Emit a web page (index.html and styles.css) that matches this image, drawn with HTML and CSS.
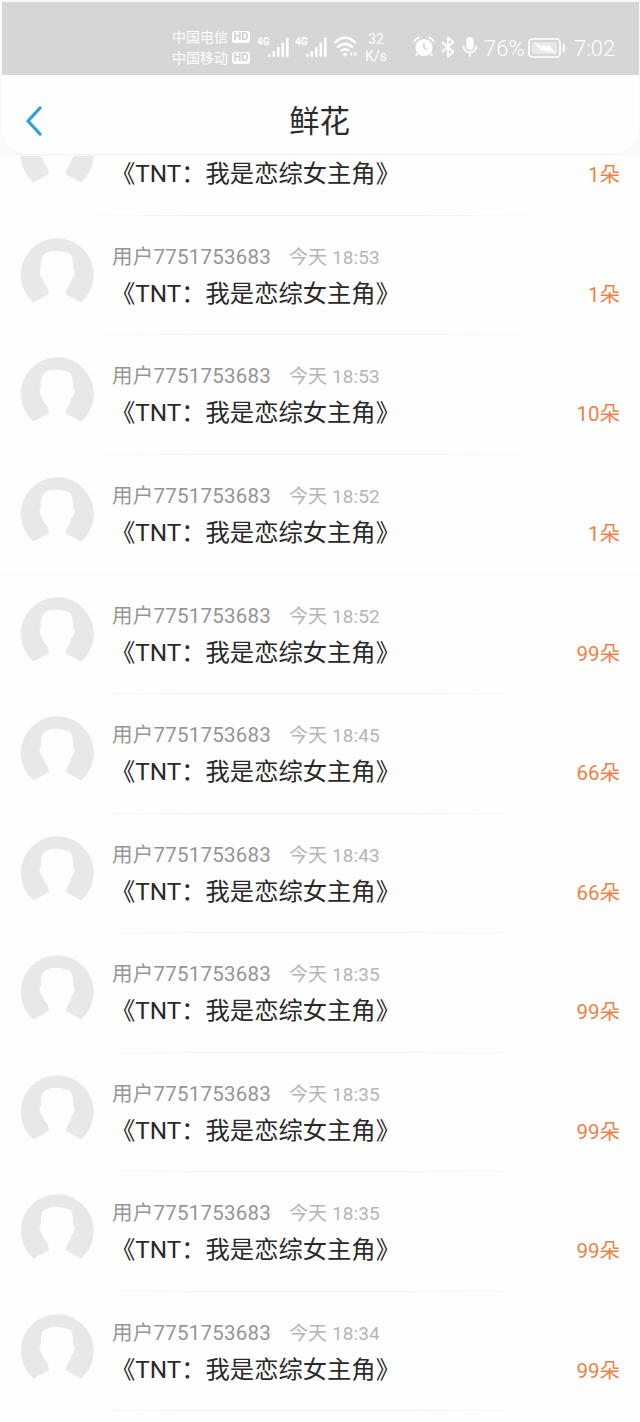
FILE: index.html
```html
<!DOCTYPE html>
<html lang="zh-CN">
<head>
<meta charset="utf-8">
<title>鲜花</title>
<link rel="stylesheet" href="styles.css">
</head>
<body>
<div class="screen">
  <div class="top">
    <div class="status">
      <div class="carriers">
        <div class="carrier">中国电信<span class="hd">HD</span></div>
        <div class="carrier">中国移动<span class="hd">HD</span></div>
      </div>
      <svg class="signal" viewBox="0 0 32 22" width="32" height="22"><text x="0" y="9" class="net">4G</text><g fill="#fff"><rect x="11" y="18" width="2.6" height="3" rx="1"/><rect x="15.5" y="15" width="2.6" height="6" rx="1"/><rect x="20" y="11" width="2.6" height="10" rx="1"/><rect x="24.5" y="6.500" width="2.6" height="14.500" rx="1"/><rect x="29" y="1.500" width="2.6" height="19.500" rx="1"/></g></svg>
      <svg class="signal second" viewBox="0 0 32 22" width="32" height="22"><text x="0" y="9" class="net">4G</text><g fill="#fff"><rect x="11" y="18" width="2.6" height="3" rx="1"/><rect x="15.5" y="15" width="2.6" height="6" rx="1"/><rect x="20" y="11" width="2.6" height="10" rx="1"/><rect x="24.5" y="6.500" width="2.6" height="14.500" rx="1"/><rect x="29" y="1.500" width="2.6" height="19.500" rx="1"/></g></svg>
      <svg class="wifi" viewBox="0 0 26 22" width="26" height="22" fill="none" stroke="#fff" stroke-width="2.500" stroke-linecap="round"><path d="M2 6.500C8 .2 16 .2 22 6.500M5 11C9 7 15 7 19 11M8.500 14.500C10.500 13 13.500 13 15.500 14.500"/><circle cx="12" cy="18.500" r="2" fill="#fff" stroke="none"/><path d="M19.300 15.500v5L16.800 18zM21.300 15.500v5L24.300 18z" fill="#fff" stroke="none"/></svg>
      <div class="speed"><span>32</span><span>K/s</span></div>
      <svg class="alarm" viewBox="0 0 22 22" width="22" height="22"><circle cx="11" cy="11.500" r="8.600" fill="#fff"/><path d="M1.500 5Q3 2.500 5.500 1.700M16.500 1.700Q19 2.500 20.500 5M4.500 17.500l-1.500 2M17.500 17.500l1.500 2" stroke="#fff" stroke-width="1.800" fill="none" stroke-linecap="round"/><path d="M11 6.500v5.200l3.500 2.500" stroke="#d6d6d6" stroke-width="1.500" fill="none"/></svg>
      <svg class="bt" viewBox="0 0 14 22" width="14" height="22" fill="none" stroke="#fff" stroke-width="1.900" stroke-linejoin="round" stroke-linecap="round"><path d="M1.500 6.500L12.300 15.800 7 20.500V1.500L12.300 6.200 1.500 15.500"/></svg>
      <svg class="mic" viewBox="0 0 16 22" width="16" height="22" fill="none" stroke="#fff" stroke-width="2" stroke-linecap="round"><rect x="4.300" y="1" width="7.400" height="13" rx="3.700" fill="#fff" stroke="none"/><path d="M1.500 10.500C2 18.200 14 18.200 14.500 10.500M8 16.500V20"/></svg>
      <span class="num pct">76%</span>
      <svg class="battery" viewBox="0 0 38 20" width="38" height="20"><rect x="1" y="1" width="31" height="18" rx="3.500" fill="none" stroke="#fff" stroke-width="1.700"/><rect x="4" y="4" width="25" height="12" rx="1" fill="#e8e8e8"/><path d="M6 4.500L15 9 14 5.500 20 9.500 20 6 28 16 21 13 21 15 15 11.500 15 14z" fill="#fff"/><path d="M35.700 6.500v7" stroke="#fff" stroke-width="2" stroke-linecap="round"/></svg>
      <span class="num clock">7:02</span>
    </div>
    <header class="header">
      <svg class="back" viewBox="0 0 20 32" width="20" height="32"><path d="M18 3L6 16 18 29" fill="none" stroke="#2f9fdf" stroke-width="3.300" stroke-linecap="round" stroke-linejoin="round"/></svg>
      <h1 class="title">鲜花</h1>
    </header>
  </div>
  <main class="viewport"><div class="list" id="list"></div></main>
</div>
<template id="row">
  <section class="row">
    <svg class="avatar" viewBox="0 0 74 74" width="74" height="74"><path d="M13.500 64.500A36.500 36.500 0 1 1 61 64.500L45.500 56Q46 52 49 48Q51 45 51.500 41Q55 38 54.500 33L53 31Q54 22 50.500 16Q46 14 40 13Q29 11.500 24 16.500Q20 21 21 30Q19 32 20 37L22.500 41Q24 46 28 50L29 56Z" fill="#e8e8e8"/></svg>
    <div class="body">
      <div class="meta"><span class="user"></span><span class="time"></span></div>
      <div class="book">《TNT：我是恋综女主角》</div>
    </div>
    <div class="count"></div>
  </section>
</template>
<script src="list.js"></script>
</body>
</html>
```
FILE: styles.css
```css
* { box-sizing: border-box; }
body {
  margin: 0;
  background: #fefefe;
  font-family: Roboto, "Noto Sans CJK SC", sans-serif;
  text-spacing-trim: space-all;
}
.screen { width: 640px; height: 1422px; overflow: hidden; display: flex; flex-direction: column; }
.top { height: 156px; background: #fbf8f9; padding: 2px 1px 0 2px; flex: none; }
.status {
  height: 73px;
  background: #d6d6d6;
  color: #fff;
  display: flex;
  align-items: flex-start;
  padding: 25px 0 0 170px;
  white-space: nowrap;
}
.carriers { width: 85px; }
.carrier { display: flex; align-items: center; font-size: 14px; height: 20.500px; line-height: 20px; gap: 4px; }
.hd { width: 18px; height: 12px; border-radius: 3px; background: #fff; color: #cfcfcf; font-size: 11px; font-weight: 700; line-height: 12px; text-align: center; }
.net { font: 700 10px Roboto, sans-serif; fill: #fff; }
.signal { margin-top: 9px; }
.second { margin-left: 6px; }
.wifi { margin: 9px 0 0 6px; }
.speed { width: 24px; margin: 4px 0 0 5px; display: flex; flex-direction: column; align-items: center; font-size: 14px; line-height: 17px; }
.alarm { margin: 9px 0 0 25px; }
.bt { margin: 9px 0 0 6px; }
.mic { margin: 9px 0 0 7px; }
.num { font-size: 22px; line-height: 26px; margin-top: 9px; font-weight: 300; }
.pct { width: 41px; margin-left: 6px; }
.battery { margin: 11px 0 0 3px; }
.clock { margin-left: 8px; }
.header {
  height: 80px;
  background: #fefefe;
  border-radius: 0 0 24px 24px;
  border-bottom: 1px solid #f4f2f2;
  display: grid;
  grid-template-columns: 100px 1fr 100px;
  align-items: center;
  padding-top: 12px;
}
.back { margin-left: 20px; }
.title { margin: 0; padding: 2px 2px 0 0; font-size: 30.500px; line-height: 44px; font-weight: 400; color: #2b2b2b; text-align: center; }
.viewport { flex: 1; overflow: hidden; }
.list { margin-top: -59.700px; }
.row { height: 119.560px; display: flex; padding-left: 20px; padding-right: 20px; background: linear-gradient(90deg, transparent 80px, #f0f0f0 200px, #f0f0f0 400px, transparent 550px) bottom / 100% 1px no-repeat; }
.row.full { background-image: linear-gradient(#f5f5f5, #f5f5f5); }
.avatar { margin-top: 22px; flex: none; }
.body { flex: 1; padding: 26px 0 0 18px; white-space: nowrap; }
.meta { display: flex; align-items: baseline; height: 30px; line-height: 30px; }
.user { width: 177px; font-size: 20.500px; letter-spacing: .24px; color: #959595; }
.time { font-size: 19px; letter-spacing: .1px; color: #b5b5b5; }
.book { font-size: 24.300px; line-height: 36px; margin: 4px 0 0 -1px; color: #292929; }
.count { padding-top: 64px; font-size: 20.500px; line-height: 30px; color: #ed8247; }
```
FILE: list.js
```js
const rows = [
  ["", 1], ["18:53", 1], ["18:53", 10], ["18:52", 1],
  ["18:52", 99], ["18:45", 66], ["18:43", 66], ["18:35", 99],
  ["18:35", 99], ["18:35", 99], ["18:34", 99]
];
const list = document.getElementById("list");
const template = document.getElementById("row");
rows.forEach(([time, count], i) => {
  const row = template.content.cloneNode(true);
  if (time) {
    row.querySelector(".user").textContent = "用户7751753683";
    row.querySelector(".time").textContent = "今天 " + time;
  }
  row.querySelector(".count").textContent = count + "朵";
  if (i === 3) row.querySelector(".row").classList.add("full");
  list.appendChild(row);
});
```
